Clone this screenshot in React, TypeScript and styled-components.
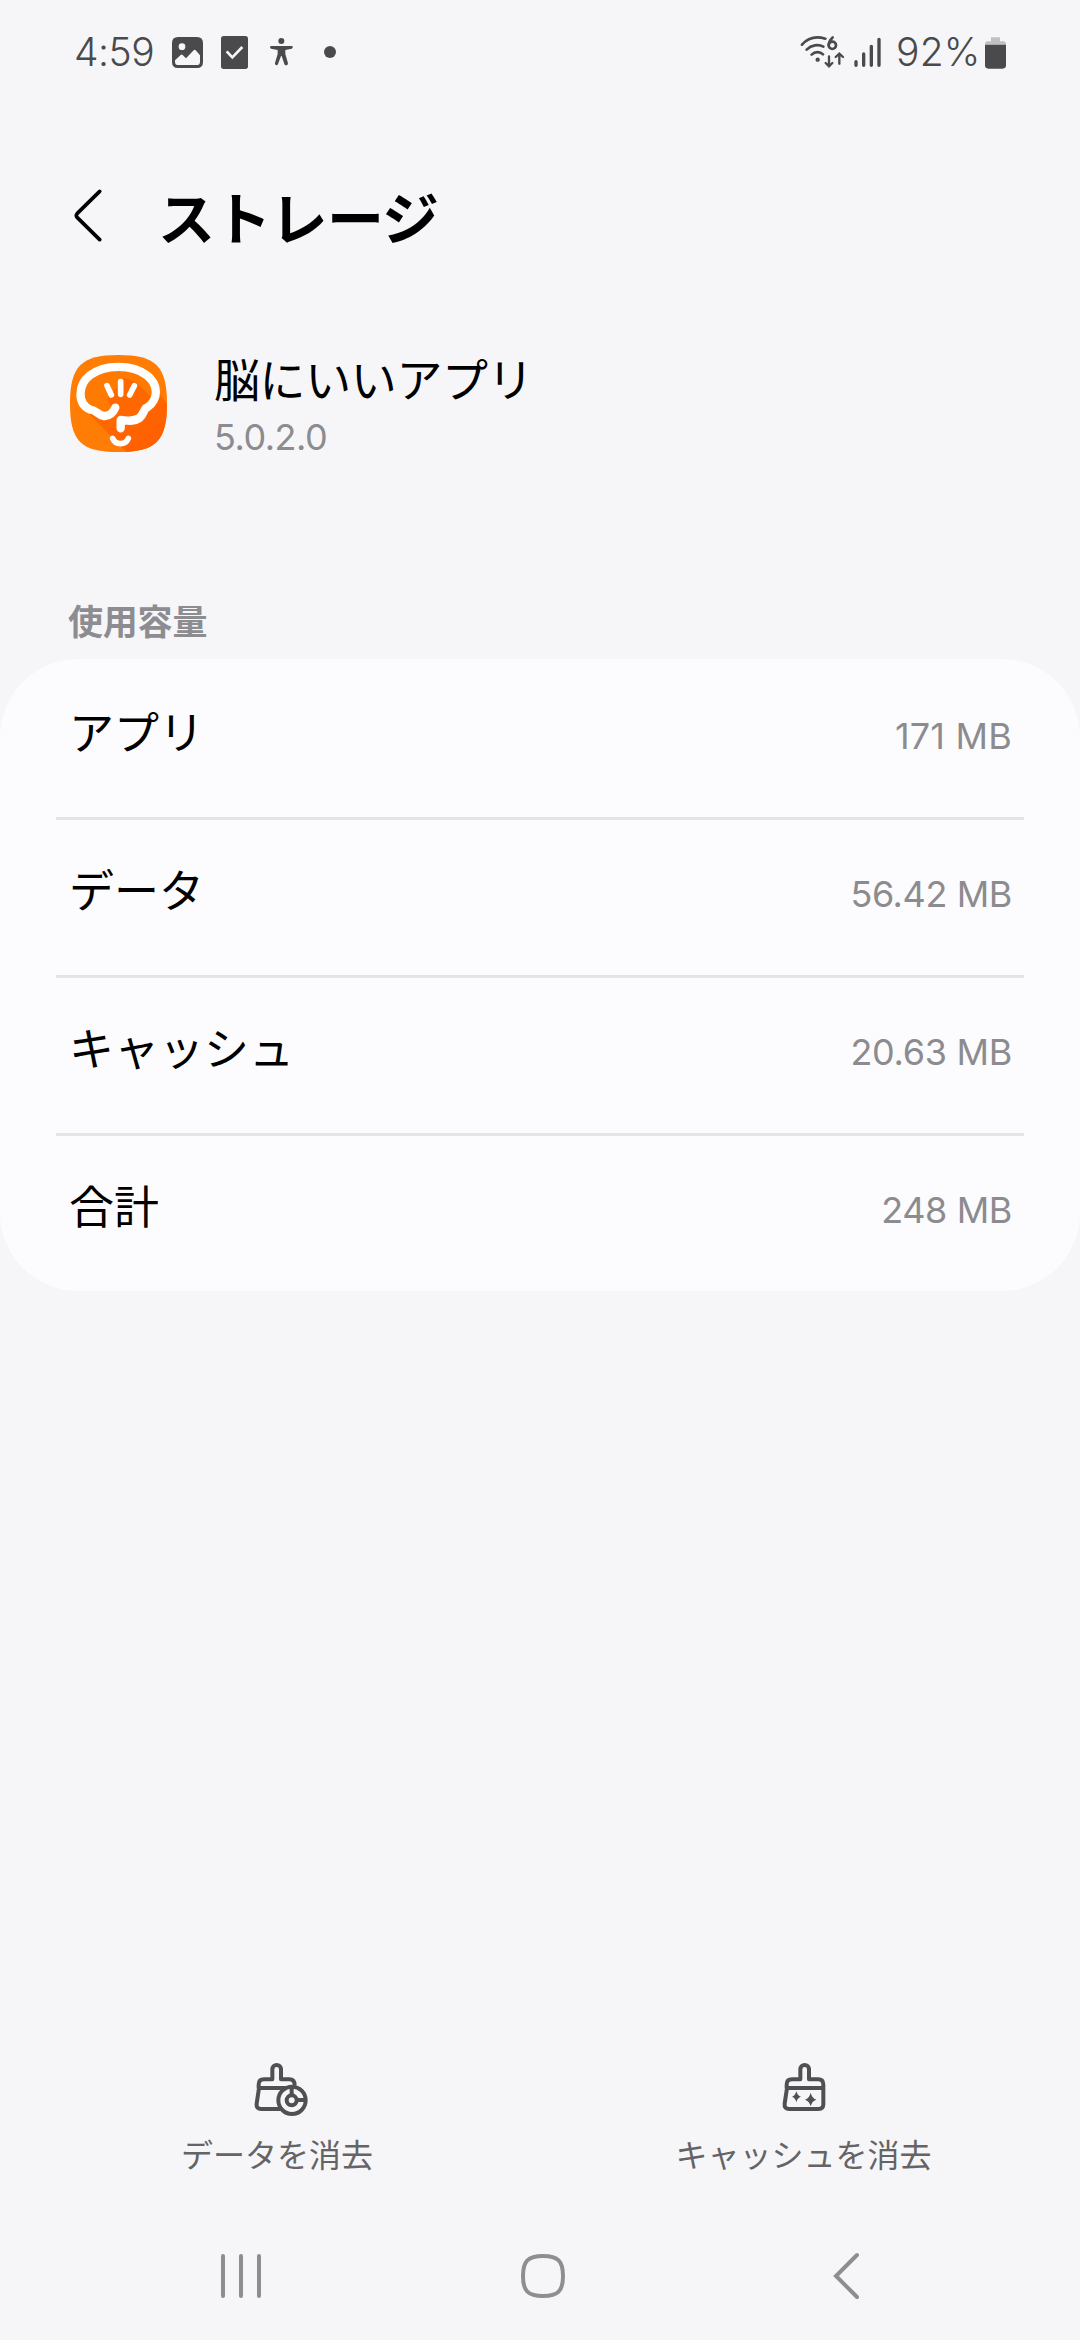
import React from "react";
import styled, { createGlobalStyle } from "styled-components";

const Global = createGlobalStyle`
  * { box-sizing: border-box; }
  body { margin: 0; background: #f6f6f8; }
`;

const jp = `"Noto Sans CJK JP", sans-serif`;
const latin = `Inter, "Noto Sans CJK JP", sans-serif`;

const Screen = styled.div`
  width: 1080px;
  height: 2340px;
  display: flex;
  flex-direction: column;
  background: #f6f6f8;
  color: #000;
  font-family: ${jp};
  overflow: hidden;
`;

const StatusBar = styled.header`
  height: 104px;
  flex: none;
  display: flex;
  align-items: center;
  justify-content: space-between;
  padding: 0 74px 0 74px;
  color: #4a4a4c;
`;

const StatusGroup = styled.div`
  display: flex;
  align-items: center;
`;

const StatusText = styled.span<{ $width: number; $tracking: number }>`
  width: ${(p) => p.$width}px;
  font: 350 39px/48px ${latin};
  letter-spacing: ${(p) => p.$tracking}px;
  white-space: nowrap;
`;

const Glyph = styled.svg<{ $gap?: number }>`
  display: block;
  flex: none;
  margin-left: ${(p) => p.$gap ?? 0}px;
`;

const TitleBar = styled.div`
  height: 224px;
  flex: none;
  display: flex;
  align-items: center;
  padding: 0 70px;
`;

const BackButton = styled.button`
  all: unset;
  width: 88px;
  display: flex;
`;

const Title = styled.h1`
  margin: 0;
  padding-bottom: 3px;
  font: 700 57px/80px ${jp};
  letter-spacing: -0.7px;
`;

const AppInfo = styled.section`
  height: 125px;
  flex: none;
  display: flex;
  align-items: flex-start;
  gap: 47px;
  padding: 27px 70px 0;
`;

const AppText = styled.div`
  display: flex;
  flex-direction: column;
  margin-top: -8px;
`;

const AppName = styled.div`
  font: 400 46px/60px ${jp};
  letter-spacing: -0.4px;
`;

const AppVersion = styled.div`
  margin-top: 5px;
  font: 400 36px/50px ${latin};
  letter-spacing: -0.5px;
  color: #8c8c90;
`;

const SectionLabel = styled.h2`
  height: 206px;
  flex: none;
  margin: 0;
  padding: 141px 68px 0;
  font: 700 35px/52px ${jp};
  letter-spacing: -0.2px;
  color: #8c8c91;
`;

const Card = styled.section`
  flex: none;
  padding: 3px 0 0;
  border-radius: 78px;
  background: #fcfcfe;
`;

const Row = styled.div<{ $last: boolean }>`
  height: ${(p) => (p.$last ? 155 : 158)}px;
  margin: 0 56px;
  padding: 0 12px 14px 13px;
  display: flex;
  align-items: center;
  justify-content: space-between;
  border-bottom: ${(p) => (p.$last ? "none" : "3px solid #e4e4e6")};
`;

const RowLabel = styled.span`
  padding-bottom: 4px;
  font: 400 45px/64px ${jp};
`;

const RowValue = styled.span<{ $tracking: number }>`
  padding-top: 6px;
  font: 400 36px/50px ${latin};
  letter-spacing: ${(p) => p.$tracking}px;
  color: #8c8c90;
`;

const Spacer = styled.div`
  flex: 1;
`;

const Actions = styled.div`
  flex: none;
  height: 150px;
  display: flex;
  padding-left: 17px;
`;

const Action = styled.button<{ $width: number }>`
  all: unset;
  width: ${(p) => p.$width}px;
  display: flex;
  flex-direction: column;
  align-items: center;
`;

const ActionLabel = styled.span`
  margin-top: 13px;
  font: 400 32px/46px ${jp};
  color: #646466;
  white-space: nowrap;
`;

const NavBar = styled.nav`
  flex: none;
  height: 128px;
  display: flex;
  align-items: center;
  padding-left: 219px;
`;

function AppIcon() {
  return (
    <Glyph width="97" height="97" viewBox="60 44 291 291">
      <defs>
        <linearGradient id="shade" x1="0" y1="0" x2="1" y2="1">
          <stop offset="0" stopColor="#ff7300" />
          <stop offset="1" stopColor="#ff5c00" />
        </linearGradient>
        <clipPath id="tile">
          <path d="M205 44C317 44 351 78 351 190S317 335 205 335S60 302 60 190S94 44 205 44Z" />
        </clipPath>
      </defs>
      <g clipPath="url(#tile)">
        <rect x="60" y="44" width="291" height="291" fill="#ff7d04" />
        <path d="M90 195L230 335H351V190L300 120L215 110L200 200Z" fill="url(#shade)" />
        <path d="M95 120L180 80H300L312 170L195 200L165 228L98 180Z" fill="#ff7a03" />
        <path d="M225 112L258 125L318 185L290 205L260 240L205 232L170 178Z" fill="#ff6800" />
      </g>
      <g fill="none" stroke="#fff" strokeWidth="25" strokeLinecap="round" strokeLinejoin="round">
        <path d="M196 202C188 220 177 228 162 227C143 225 140 209 121 208C80 190 84 133 120 105C164 71 247 71 291 105C326 133 327 177 291 202C281 204 284 219 268 233C250 246 231 240 212 239V264" />
        <path d="M212 124V162M171 136L184 164M253 136L239 164" strokeWidth="17" />
      </g>
      <path d="M188 294C197 315 226 315 235 294" fill="none" stroke="#fff" strokeWidth="17" strokeLinecap="round" />
    </Glyph>
  );
}

function ClearDataIcon() {
  return (
    <Glyph $gap={8} width="54" height="55" viewBox="316 66 162 165">
      <g fill="none" stroke="#505052" strokeWidth="12" strokeLinejoin="round">
        <path d="M330 145V134Q330 118 346 118H371V88a13 13 0 0 1 26 0V118H422Q438 118 438 136" />
        <path d="M328 144H425" />
        <path d="M331 144L324 191Q322 207 338 207H396" />
        <circle cx="430" cy="181" r="41" fill="#f6f6f8" />
        <circle cx="429" cy="181" r="15" />
        <path d="M429 144V164M446 180H468" />
      </g>
    </Glyph>
  );
}

function ClearCacheIcon() {
  return (
    <Glyph width="44" height="55" viewBox="394 66 132 165">
      <g fill="none" stroke="#505052" strokeWidth="12" strokeLinejoin="round">
        <path d="M408 145V134Q408 118 424 118H449V88a13 13 0 0 1 26 0V118H502Q518 118 518 134V193Q518 207 504 207H416Q400 207 402 191L409 144H518" />
      </g>
      <path
        fill="#505052"
        d="M437 153Q440 167 451 170Q440 173 437 187Q434 173 424 170Q434 167 437 153ZM480 158Q484 175 497 179Q484 183 480 199Q476 183 463 179Q476 175 480 158Z"
      />
    </Glyph>
  );
}

const usage = [
  { label: "アプリ", value: "171 MB", tracking: 0.2 },
  { label: "データ", value: "56.42 MB", tracking: -0.4 },
  { label: "キャッシュ", value: "20.63 MB", tracking: -0.3 },
  { label: "合計", value: "248 MB", tracking: -0.4 },
];

export default function App() {
  return (
    <Screen>
      <Global />
      <StatusBar>
        <StatusGroup>
          <StatusText $width={98} $tracking={-0.5}>4:59</StatusText>
          <Glyph width="31" height="31" viewBox="0 0 93 93">
            <path
              fillRule="evenodd"
              fill="#4a4a4c"
              d="M18 0H75Q93 0 93 18V75Q93 93 75 93H18Q0 93 0 75V18Q0 0 18 0ZM30 19a10 10 0 1 0 0 20a10 10 0 1 0 0-20ZM9 70V74Q9 84 19 84H74Q84 84 84 74V55L71 40Q68 37 65 40L42 64L32 54Q29 51 26 54Z"
            />
          </Glyph>
          <Glyph $gap={18} width="27" height="33" viewBox="0 0 81 99">
            <rect width="81" height="99" rx="8" fill="#4a4a4c" />
            <path d="M17 46L34 64L64 33" fill="none" stroke="#f6f6f8" strokeWidth="8" />
          </Glyph>
          <Glyph $gap={22} width="23" height="28" viewBox="0 0 69 84">
            <circle cx="34" cy="9" r="9" fill="#4a4a4c" />
            <path
              fill="#4a4a4c"
              d="M2 24H67Q70 29 65 32L46 36V48L54 76Q54 82 49 82Q45 83 43 78L35 54H33L24 78Q22 83 18 81Q14 80 15 75L23 48V36L3 32Q-2 29 2 24Z"
            />
          </Glyph>
          <Glyph $gap={31} width="12" height="12" viewBox="0 0 12 12">
            <circle cx="6" cy="6" r="6" fill="#4a4a4c" />
          </Glyph>
        </StatusGroup>
        <StatusGroup>
          <Glyph width="45" height="35" viewBox="60 45 135 105">
            <g fill="none" stroke="#4a4a4c" strokeWidth="8" strokeLinecap="round">
              <path d="M66 74C85 52 112 49 136 56M80 89C94 75 115 72 130 80M95 104C105 94 120 94 129 103" />
              <path d="M158 52C150 60 146 68 146 76" />
              <circle cx="157" cy="76" r="11" />
              <path d="M147 109V138M137 129L147 139L157 129M178 131V102M167 111L178 101L189 111" strokeWidth="7" />
            </g>
            <circle cx="113" cy="119" r="6.5" fill="#4a4a4c" />
          </Glyph>
          <Glyph $gap={8} width="28" height="31" viewBox="219 48 84 93">
            <path
              d="M228 122V133M251 99V133M274 76V133M297 55V133"
              fill="none"
              stroke="#4a4a4c"
              strokeWidth="10"
              strokeLinecap="round"
            />
          </Glyph>
          <Glyph width="15" height="1" />
          <StatusText $width={89} $tracking={0.2}>92%</StatusText>
          <Glyph width="21" height="33" viewBox="0 0 63 99">
            <path d="M18 4H45V16H55Q63 16 63 26H0Q0 16 8 16H18Z" fill="#c0c0c2" />
            <path d="M0 26H63V88Q63 98 53 98H10Q0 98 0 88Z" fill="#4a4a4c" />
          </Glyph>
        </StatusGroup>
      </StatusBar>

      <TitleBar>
        <BackButton aria-label="戻る">
          <Glyph $gap={4} width="30" height="54" viewBox="0 0 90 162">
            <path d="M77 7L10 73Q4 80 10 86L77 152" fill="none" stroke="#000" strokeWidth="11" strokeLinecap="round" />
          </Glyph>
        </BackButton>
        <Title>ストレージ</Title>
      </TitleBar>

      <AppInfo>
        <AppIcon />
        <AppText>
          <AppName>脳にいいアプリ</AppName>
          <AppVersion>5.0.2.0</AppVersion>
        </AppText>
      </AppInfo>

      <SectionLabel>使用容量</SectionLabel>
      <Card>
        {usage.map((item, i) => (
          <Row key={item.label} $last={i === usage.length - 1}>
            <RowLabel>{item.label}</RowLabel>
            <RowValue $tracking={item.tracking}>{item.value}</RowValue>
          </Row>
        ))}
      </Card>

      <Spacer />

      <Actions>
        <Action $width={520}>
          <ClearDataIcon />
          <ActionLabel>データを消去</ActionLabel>
        </Action>
        <Action $width={533}>
          <ClearCacheIcon />
          <ActionLabel>キャッシュを消去</ActionLabel>
        </Action>
      </Actions>

      <NavBar>
        <Glyph width="43" height="44" viewBox="0 0 43 44">
          <path d="M4 2V42M22 2V42M40 2V42" stroke="#8e8e8e" strokeWidth="4" strokeLinecap="round" />
        </Glyph>
        <Glyph $gap={258} width="46" height="46" viewBox="0 0 46 46">
          <path
            d="M23 3C38 3 43 8 43 23S38 43 23 43S3 38 3 23S8 3 23 3Z"
            fill="none"
            stroke="#8e8e8e"
            strokeWidth="4"
          />
        </Glyph>
        <Glyph $gap={266} width="28" height="48" viewBox="0 0 28 48">
          <path d="M25 3L4 24L25 45" fill="none" stroke="#8e8e8e" strokeWidth="4" strokeLinecap="round" />
        </Glyph>
      </NavBar>
    </Screen>
  );
}
